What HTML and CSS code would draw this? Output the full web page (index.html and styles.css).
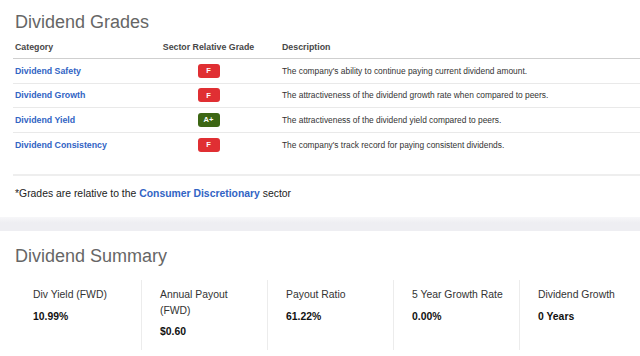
FILE: index.html
```html
<!DOCTYPE html>
<html lang="en">
<head>
<meta charset="utf-8">
<title>Dividend Grades</title>
<link rel="stylesheet" href="styles.css">
</head>
<body>
<section class="grades">
  <h2 class="title">Dividend Grades</h2>
  <div class="table">
    <div class="row head">
      <div class="c-cat">Category</div>
      <div class="c-grade">Sector Relative Grade</div>
      <div class="c-desc">Description</div>
    </div>
    <div class="row">
      <div class="c-cat"><a class="link">Dividend Safety</a></div>
      <div class="c-grade"><span class="badge bad">F</span></div>
      <div class="c-desc">The company's ability to continue paying current dividend amount.</div>
    </div>
    <div class="row">
      <div class="c-cat"><a class="link">Dividend Growth</a></div>
      <div class="c-grade"><span class="badge bad">F</span></div>
      <div class="c-desc">The attractiveness of the dividend growth rate when compared to peers.</div>
    </div>
    <div class="row">
      <div class="c-cat"><a class="link">Dividend Yield</a></div>
      <div class="c-grade"><span class="badge good">A+</span></div>
      <div class="c-desc">The attractiveness of the dividend yield compared to peers.</div>
    </div>
    <div class="row">
      <div class="c-cat"><a class="link">Dividend Consistency</a></div>
      <div class="c-grade"><span class="badge bad">F</span></div>
      <div class="c-desc">The company's track record for paying consistent dividends.</div>
    </div>
  </div>
  <p class="note">*Grades are relative to the <a class="link">Consumer Discretionary</a> sector</p>
</section>
<div class="band"></div>
<section class="summary">
  <h2 class="title">Dividend Summary</h2>
  <div class="cards">
    <div class="card"><div class="label">Div Yield (FWD)</div><div class="value">10.99%</div></div>
    <div class="card"><div class="label">Annual Payout (FWD)</div><div class="value">$0.60</div></div>
    <div class="card"><div class="label">Payout Ratio</div><div class="value">61.22%</div></div>
    <div class="card"><div class="label">5 Year Growth Rate</div><div class="value">0.00%</div></div>
    <div class="card"><div class="label">Dividend Growth</div><div class="value">0 Years</div></div>
  </div>
</section>
</body>
</html>
```
FILE: styles.css
```css
html, body {
  margin: 0;
  padding: 0;
  background: #ffffff;
  overflow: hidden;
}
body {
  font-family: "Liberation Sans", Arial, sans-serif;
  color: #333333;
}
.title {
  margin: 0;
  padding-left: 15px;
  font-size: 18px;
  line-height: 22px;
  font-weight: normal;
  color: #666666;
}
.grades {
  padding-top: 11px;
}
.table {
  margin-left: 13px;
}
.row {
  display: grid;
  grid-template-columns: 142px 107px 1fr;
  align-items: center;
  height: 24.5px;
  box-sizing: border-box;
  border-bottom: 1px solid #e9e9e9;
  font-size: 8.4px;
}
.row:last-child {
  border-bottom: none;
}
.row.head {
  height: 26px;
  align-items: end;
  padding-bottom: 4.6px;
  border-bottom: 1px solid #cfcfcf;
  font-size: 8.8px;
  line-height: 11px;
  font-weight: bold;
  color: #474747;
}
.c-cat {
  padding-left: 2px;
  font-size: 8.8px;
}
.c-grade {
  text-align: center;
}
.c-desc {
  padding-left: 20px;
  white-space: nowrap;
  color: #333333;
}
.row.head .c-desc {
  color: #474747;
}
.link {
  color: #3164c4;
  font-weight: bold;
  text-decoration: none;
}
.badge {
  display: inline-flex;
  align-items: center;
  justify-content: center;
  width: 22px;
  height: 14px;
  border-radius: 3px;
  color: #ffffff;
  font-size: 7.5px;
  font-weight: bold;
  vertical-align: middle;
}
.badge.bad {
  background: #e02f33;
}
.badge.good {
  background: #3c6614;
}
.note {
  margin: 17px 0 0 13px;
  padding: 10px 0 16px 2px;
  border-top: 2px solid #eeeeee;
  font-size: 10.4px;
  line-height: 15px;
  color: #222222;
}
.band {
  height: 14px;
  background: linear-gradient(#f7f7f9, #eeeef2 40%, #eeeef2);
}
.summary {
  padding-top: 14px;
}
.cards {
  display: flex;
  margin-top: 13px;
  padding-left: 15px;
}
.card {
  flex: none;
  width: 126px;
  box-sizing: border-box;
  padding: 7px 12px 10px 18px;
  height: 70px;
}
.card + .card {
  border-left: 1px solid #ececec;
}
.label {
  font-size: 10.4px;
  line-height: 15.7px;
  color: #333333;
}
.value {
  margin-top: 6px;
  font-size: 10.4px;
  line-height: 15.7px;
  font-weight: bold;
  color: #111111;
}
```
